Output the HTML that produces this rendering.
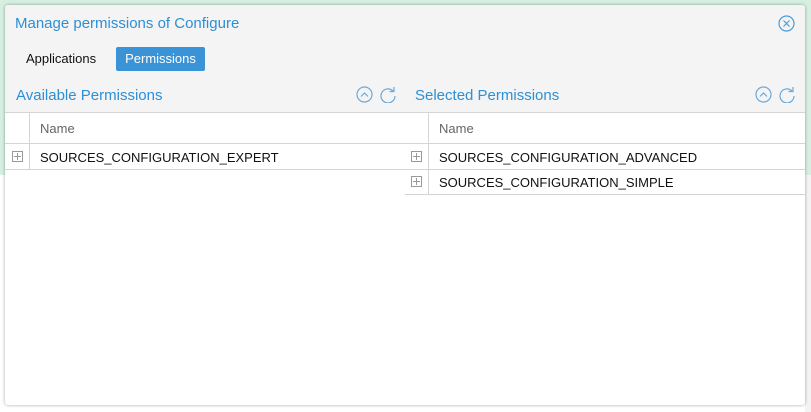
<!DOCTYPE html>
<html><head><style>
*{box-sizing:border-box;margin:0;padding:0}
body{width:811px;height:412px;position:relative;overflow:hidden;background:#fff;font-family:"Liberation Sans",sans-serif}
.abs{position:absolute}
.t{color:#2d8fd5}
.ln{position:absolute;background:#d4d4d4}
.box{position:absolute;width:11px;height:11px;border:1px solid #999}
.box:before{content:"";position:absolute;left:4px;top:1px;width:1px;height:7px;background:#999}
.box:after{content:"";position:absolute;left:1px;top:4px;width:7px;height:1px;background:#999}
.cell{position:absolute;font-size:13px;color:#111}
</style></head><body>
<div class="abs" style="left:0;top:0;width:811px;height:175px;background:#d6efe0"></div>
<div class="abs" style="left:805px;top:175px;width:6px;height:237px;background:#f3f3f3"></div>
<div class="abs" style="left:5px;top:5px;width:800px;height:400px;background:#fff;border-radius:3px;box-shadow:0 0 3px rgba(0,0,0,.35);overflow:hidden">
  <div class="abs" style="left:0;top:0;width:800px;height:108px;background:#f4f4f4"></div>
  <div class="abs t" style="left:10px;top:10px;font-size:15px">Manage permissions of Configure</div>
  <svg class="abs" style="left:773px;top:10px" width="17" height="17" viewBox="0 0 17 17"><circle cx="8.5" cy="8.5" r="7.5" fill="none" stroke="#4a9bd8" stroke-width="1.2"/><path d="M5.5 5.5L11.5 11.5M11.5 5.5L5.5 11.5" stroke="#4a9bd8" stroke-width="1.2"/></svg>
  <div class="abs" style="left:21px;top:46px;font-size:13px;color:#111">Applications</div>
  <div class="abs" style="left:111px;top:42px;width:89px;height:24px;background:#3a93d6;border-radius:2px;color:#fff;font-size:13px;line-height:24px;text-align:center">Permissions</div>
  <div class="abs t" style="left:11px;top:82px;font-size:15px">Available Permissions</div>
  <div class="abs t" style="left:410px;top:82px;font-size:15px">Selected Permissions</div>
  <svg class="abs" style="left:351px;top:81px" width="42" height="17" viewBox="0 0 42 17"><circle cx="8.5" cy="8.5" r="7.5" fill="none" stroke="#6aa9dc" stroke-width="1.2"/><path d="M5 10.5L8.5 7L12 10.5" fill="none" stroke="#6aa9dc" stroke-width="1.2"/><path d="M37 5A7 7 0 1 0 39 10" fill="none" stroke="#6aa9dc" stroke-width="1.2"/><path d="M38 1V5.5H33.5" fill="none" stroke="#6aa9dc" stroke-width="1.2"/></svg>
  <svg class="abs" style="left:750px;top:81px" width="42" height="17" viewBox="0 0 42 17"><circle cx="8.5" cy="8.5" r="7.5" fill="none" stroke="#6aa9dc" stroke-width="1.2"/><path d="M5 10.5L8.5 7L12 10.5" fill="none" stroke="#6aa9dc" stroke-width="1.2"/><path d="M37 5A7 7 0 1 0 39 10" fill="none" stroke="#6aa9dc" stroke-width="1.2"/><path d="M38 1V5.5H33.5" fill="none" stroke="#6aa9dc" stroke-width="1.2"/></svg>
  <div class="ln" style="left:0;top:107px;width:800px;height:1px"></div>
  <div class="ln" style="left:0;top:138px;width:800px;height:1px"></div>
  <div class="ln" style="left:0;top:164px;width:800px;height:1px"></div>
  <div class="ln" style="left:400px;top:189px;width:400px;height:1px"></div>
  <div class="ln" style="left:24px;top:108px;width:1px;height:56px"></div>
  <div class="ln" style="left:423px;top:108px;width:1px;height:81px"></div>
  <div class="cell" style="left:35px;top:116px;color:#666">Name</div>
  <div class="cell" style="left:434px;top:116px;color:#666">Name</div>
  <div class="box" style="left:7px;top:146px"></div>
  <div class="cell" style="left:35px;top:145px">SOURCES_CONFIGURATION_EXPERT</div>
  <div class="box" style="left:406px;top:146px"></div>
  <div class="cell" style="left:434px;top:145px">SOURCES_CONFIGURATION_ADVANCED</div>
  <div class="box" style="left:406px;top:171px"></div>
  <div class="cell" style="left:434px;top:170px">SOURCES_CONFIGURATION_SIMPLE</div>
</div>
</body></html>
